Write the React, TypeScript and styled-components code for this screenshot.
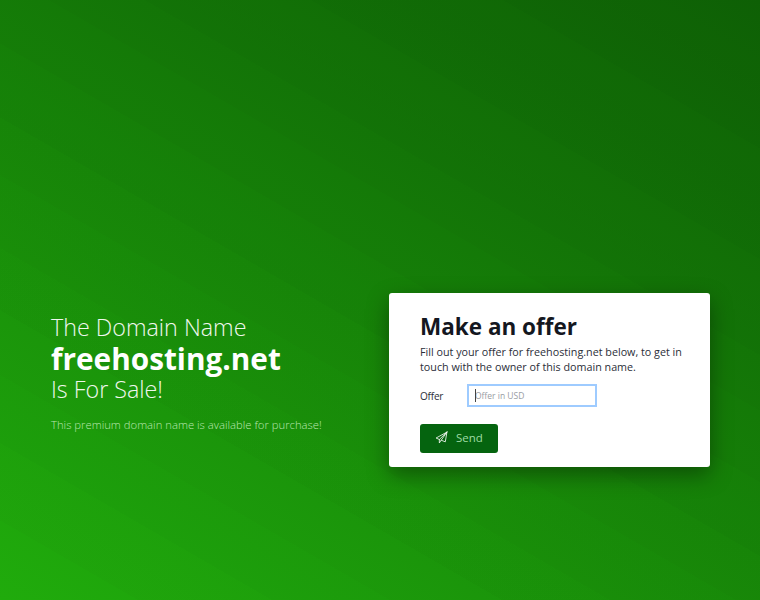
import React from 'react';
import styled, { createGlobalStyle } from 'styled-components';

const GlobalStyle = createGlobalStyle`
  html, body {
    margin: 0;
    padding: 0;
  }
  body {
    font-family: "Open Sans", "Liberation Sans", sans-serif;
  }
`;

// band edges of the backdrop, measured in px along the 30deg gradient line
const bandEdges = [69, 136, 195, 251, 305, 368, 418, 482, 544, 592, 675, 771, 900];

const bandStops = bandEdges
  .map((edge, i) => {
    const alpha = (i * 0.016).toFixed(3);
    const from = i === 0 ? 0 : bandEdges[i - 1];
    return `rgba(0,0,0,${alpha}) ${from}px, rgba(0,0,0,${alpha}) ${edge}px`;
  })
  .join(', ');

const Page = styled.div`
  width: 760px;
  height: 600px;
  box-sizing: border-box;
  overflow: hidden;
  padding: 160px 50px 0 51px;
  display: flex;
  align-items: center;
  justify-content: space-between;
  background: linear-gradient(30deg, ${bandStops}),
    linear-gradient(30deg, #20ab0c 0%, #117706 100%);
`;

const Pitch = styled.div`
  width: 320px;
  margin-bottom: 14px;
  color: #fff;
`;

const Lead = styled.div`
  font-size: 23.3px;
  font-weight: 300;
  line-height: 31px;
  color: #f0f7ee;
`;

const Domain = styled.h1`
  margin: 0;
  font-size: 29.75px;
  font-weight: 700;
  line-height: 31px;
  color: #fff;
`;

const Note = styled.p`
  margin: 11px 0 0;
  font-size: 11.3px;
  font-weight: 300;
  line-height: 18px;
  color: #b9e6b0;
`;

const Card = styled.form`
  width: 321px;
  height: 174px;
  box-sizing: border-box;
  padding: 19px 25px 0 31px;
  background: #fff;
  border-radius: 3px;
  box-shadow: 0 8px 22px rgba(0, 0, 0, 0.38);
`;

const CardTitle = styled.h2`
  margin: 0;
  font-size: 22.5px;
  font-weight: 700;
  line-height: 30px;
  color: #14171f;
`;

const CardText = styled.p`
  margin: 3px 0 0;
  font-size: 10.75px;
  font-weight: 500;
  line-height: 15px;
  color: #2b2e38;
`;

const Row = styled.div`
  display: flex;
  align-items: center;
  margin-top: 9px;
`;

const Label = styled.label`
  width: 47px;
  font-size: 10px;
  font-weight: 500;
  letter-spacing: -0.2px;
  color: #2b2e38;
`;

const InputWrap = styled.div`
  position: relative;
  width: 130px;
  height: 23px;

  &::after {
    content: '';
    position: absolute;
    left: 8px;
    top: 5px;
    width: 1px;
    height: 13px;
    background: #444;
  }
`;

const OfferInput = styled.input`
  display: block;
  width: 100%;
  height: 100%;
  box-sizing: border-box;
  padding: 0 8px;
  border: 0;
  border-bottom: 1px solid #5b7fb5;
  outline: 2px solid #9ecbff;
  outline-offset: -2px;
  background: #fff;
  font-family: inherit;
  font-size: 8.5px;
  color: #333;

  &::placeholder {
    color: #9a9da3;
  }
`;

const SendButton = styled.button`
  display: flex;
  align-items: center;
  gap: 8px;
  width: 78px;
  height: 29px;
  box-sizing: border-box;
  margin-top: 17px;
  padding: 0 15px 2px;
  border: 0;
  border-radius: 3px;
  background: #05640f;
  color: #9fdca4;
  font-family: inherit;
  font-size: 11.5px;
`;

const PlaneIcon = () => (
  <svg width="13" height="13" viewBox="0 0 24 24" fill="none" stroke="#fff" strokeWidth="1.5" strokeLinejoin="round" strokeLinecap="round">
    <path d="M22 2 2 13l6 2.6L22 2Z" />
    <path d="M22 2 19 20l-7.5-3L8 22v-6.4" />
    <path d="M11.5 17 22 2" />
  </svg>
);

export default function App() {
  return (
    <>
      <GlobalStyle />
      <Page>
        <Pitch>
          <Lead>The Domain Name</Lead>
          <Domain>freehosting.net</Domain>
          <Lead>Is For Sale!</Lead>
          <Note>This premium domain name is available for purchase!</Note>
        </Pitch>
        <Card onSubmit={(e) => e.preventDefault()}>
          <CardTitle>Make an offer</CardTitle>
          <CardText>
            Fill out your offer for freehosting.net below, to get in touch with the owner of this
            domain name.
          </CardText>
          <Row>
            <Label htmlFor="offer">Offer</Label>
            <InputWrap>
              <OfferInput id="offer" placeholder="Offer in USD" />
            </InputWrap>
          </Row>
          <SendButton type="submit">
            <PlaneIcon />
            Send
          </SendButton>
        </Card>
      </Page>
    </>
  );
}
